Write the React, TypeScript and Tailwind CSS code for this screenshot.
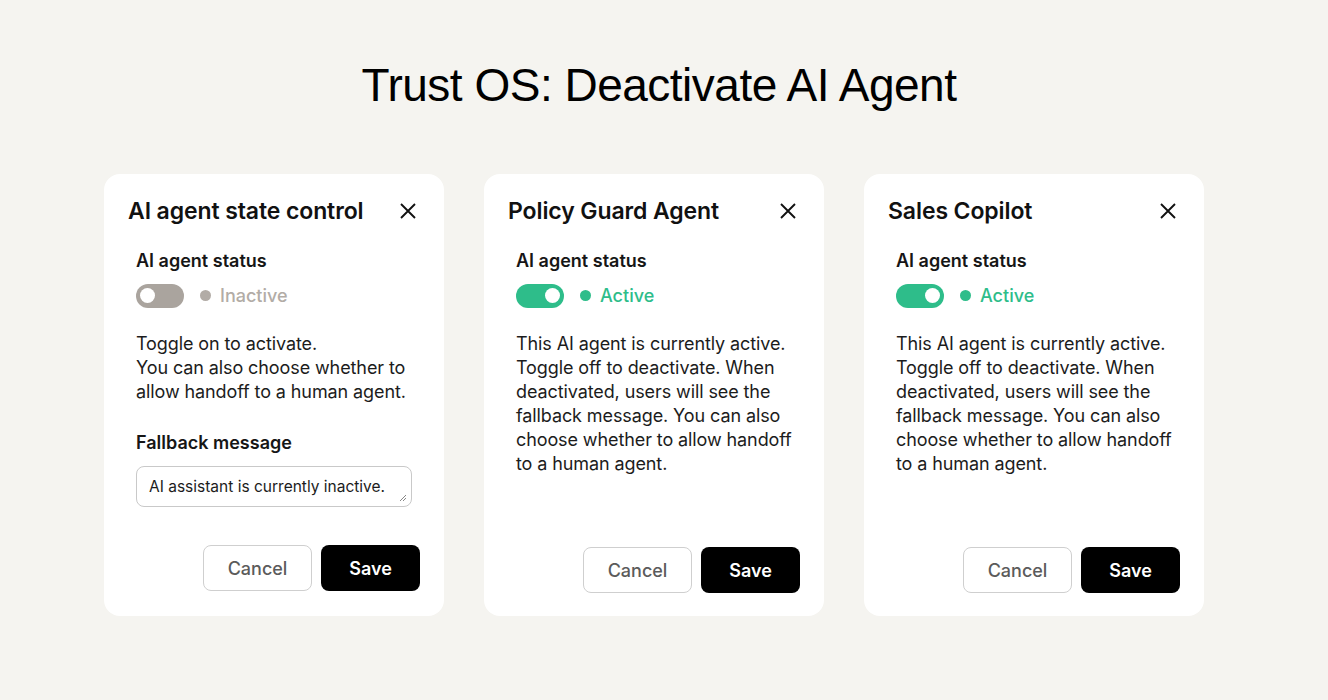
type CardProps = {
  title: string;
  active: boolean;
  lines: string[];
  fallback?: boolean;
};

const Toggle = ({ active }: { active: boolean }) => (
  <div
    className={
      active
        ? "flex items-center justify-end w-12 h-6 rounded-full bg-[#2ebd8a] px-1"
        : "flex items-center justify-start w-12 h-6 rounded-full bg-[#aaa49e] px-1"
    }
  >
    <div className="w-[15px] h-[15px] rounded-full bg-white" />
  </div>
);

const CloseIcon = () => (
  <svg width="16" height="16" viewBox="0 0 16 16" fill="none">
    <path d="M1 1 L15 15 M15 1 L1 15" stroke="#111" strokeWidth="1.9" />
  </svg>
);

const AgentCard = ({ title, active, lines, fallback }: CardProps) => {
  return (
    <div
      className={
        fallback
          ? "flex flex-col w-[340px] h-[442px] bg-white rounded-2xl pt-[22px] pb-[25px]"
          : "flex flex-col w-[340px] h-[442px] bg-white rounded-2xl pt-[22px] pb-[23px]"
      }
    >
      <div className="flex items-center justify-between pl-6 pr-[28px]">
        <h2 className="text-[23px] leading-[30px] font-semibold tracking-[-0.1px] text-[#111]">
          {title}
        </h2>
        <CloseIcon />
      </div>

      <div className="px-8 mt-[23px]">
        <div className="text-[18px] leading-6 font-semibold text-[#161616]">
          AI agent status
        </div>
        <div className="flex items-center mt-[9px] gap-4 h-[27px]">
          <Toggle active={active} />
          <div className="flex items-center gap-[9px]">
            <span
              className={
                active
                  ? "w-[11px] h-[11px] rounded-full bg-[#2ebd8a]"
                  : "w-[11px] h-[11px] rounded-full bg-[#b2aca6]"
              }
            />
            <span
              className={
                active
                  ? "text-[18px] font-medium text-[#2ebd8a]"
                  : "text-[18px] font-medium text-[#b2aca6]"
              }
            >
              {active ? "Active" : "Inactive"}
            </span>
          </div>
        </div>

        <p className="mt-[23px] text-[18px] leading-6 tracking-[-0.1px] text-[#1c1c1c]">
          {lines.map((l, i) => (
            <span key={i} className="block">
              {l}
            </span>
          ))}
        </p>

        {fallback && (
          <div className="mt-[27px]">
            <div className="text-[18px] leading-6 font-semibold text-[#161616]">
              Fallback message
            </div>
            <div className="relative mt-[11px] h-[41px] w-full rounded-lg border border-[#c9c9c9] flex items-center px-3">
              <span className="text-[15.5px] text-[#1c1c1c]">
                AI assistant is currently inactive.
              </span>
              <svg
                width="8"
                height="8"
                viewBox="0 0 8 8"
                className="absolute right-[4px] bottom-[4px]"
              >
                <path d="M7 1 L1 7 M7 4 L4 7" stroke="#888" strokeWidth="1" />
              </svg>
            </div>
          </div>
        )}
      </div>

      <div className="mt-auto flex justify-end gap-[9px] pr-6">
        <button className="w-[109px] h-[46px] rounded-lg border border-[#cfcfcf] bg-white text-[18px] font-medium text-[#5b5b5b]">
          Cancel
        </button>
        <button className="w-[99px] h-[46px] rounded-lg bg-black text-[18px] font-semibold text-white">
          Save
        </button>
      </div>
    </div>
  );
};

const App = () => {
  return (
    <div
      className="w-full h-[700px] bg-[#f5f4f0] flex flex-col items-center"
      style={{ fontFamily: "Inter, 'Noto Sans', sans-serif" }}
    >
      <h1
        className="mt-[58px] text-[46px] leading-[54px] text-black tracking-[-0.5px] pr-[10px]"
        style={{ fontFamily: "'Liberation Sans', Arial, sans-serif" }}
      >
        Trust OS: Deactivate AI Agent
      </h1>
      <div className="mt-[62px] flex gap-10 pr-5">
        <AgentCard
          title="AI agent state control"
          active={false}
          fallback
          lines={[
            "Toggle on to activate.",
            "You can also choose whether to",
            "allow handoff to a human agent.",
          ]}
        />
        <AgentCard
          title="Policy Guard Agent"
          active
          lines={[
            "This AI agent is currently active.",
            "Toggle off to deactivate. When",
            "deactivated, users will see the",
            "fallback message. You can also",
            "choose whether to allow handoff",
            "to a human agent.",
          ]}
        />
        <AgentCard
          title="Sales Copilot"
          active
          lines={[
            "This AI agent is currently active.",
            "Toggle off to deactivate. When",
            "deactivated, users will see the",
            "fallback message. You can also",
            "choose whether to allow handoff",
            "to a human agent.",
          ]}
        />
      </div>
    </div>
  );
};

export default App;
